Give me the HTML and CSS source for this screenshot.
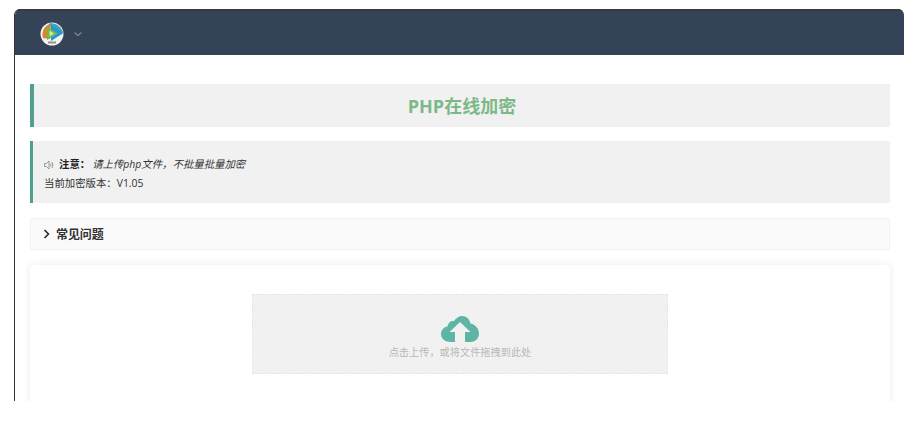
FILE: index.html
```html
<!DOCTYPE html>
<html lang="zh-CN">

<head>
    <meta charset="UTF-8">
    <meta name="viewport" content="width=device-width, initial-scale=1.0">
    <title>PHP在线加密</title>
    <link rel="stylesheet" href="styles.css">
</head>

<body>
    <div class="window">
        <div class="header">
            <svg class="logo" width="24" height="24" viewBox="0 0 24 24">
                <circle cx="12" cy="12" r="11.500" fill="#f2f2f0" />
                <path d="M3 16C1 9 5 3 11 1.500L10 17Z" fill="#d9852f" />
                <path d="M9 1.500C15 0 21 4 23.500 11L12 7Z" fill="#3aa7b9" />
                <path d="M11 3 23.500 11 11 19Z" fill="#2b93d6" />
                <path d="M7 5 18 11.500 7 18Z" fill="#6fbb4a" />
                <path d="M9.500 8.500 14 11.500 9.500 14.500Z" fill="#cfe6b0" />
                <path d="M8 20.500H16" stroke="#8e9490" stroke-width="1.800" />
            </svg>
            <svg class="caret" width="10" height="10" viewBox="0 0 10 10">
                <path d="M1.500 3.500 5 6.500 8.500 3.500" fill="none" stroke="#7f8997" stroke-width="1.300" />
            </svg>
        </div>

        <div class="content">
            <h1 class="title">PHP在线加密</h1>

            <div class="notice">
                <p class="notice-line">
                    <svg class="sound" width="10" height="10" viewBox="0 0 10 10">
                        <path d="M.5 3.500H2.500L5 1V9L2.500 6.500H.5ZM6.500 3.500Q7.500 5 6.500 6.500M8 2Q9.800 5 8 8" fill="none" stroke="#777" stroke-width=".7" />
                    </svg>
                    <strong>注意：</strong>
                    <em>请上传php文件，不批量批量加密</em>
                </p>
                <p class="notice-line">当前加密版本：V1.05</p>
            </div>

            <div class="faq">
                <svg width="8" height="10" viewBox="0 0 8 10">
                    <path d="M1.500 1 5.500 5 1.500 9" fill="none" stroke="#222" stroke-width="1.500" />
                </svg>
                <span>常见问题</span>
            </div>

            <div class="card">
                <div class="upload">
                    <svg class="cloud" width="38" height="26" viewBox="0 0 38 26">
                        <path d="M10 26C4 26 0 22.500 0 18 0 14 3 11 6.500 10.500 7 6.500 10 4.500 13 5 15 2 18 0 21 0 25.500 0 28.500 3 29.500 7.500 34.500 8.500 38 13 38 17.500 38 22.500 34 26 29 26H24V16H29.500L19 6 8.500 16H14V26Z" fill="#5fb5a5" />
                    </svg>
                    <p class="upload-text">点击上传，或将文件拖拽到此处</p>
                </div>
            </div>
        </div>
    </div>
</body>

</html>
```

FILE: styles.css
```css
* {
    margin: 0;
    padding: 0;
    box-sizing: border-box;
}

body {
    background-color: #fff;
    font-family: "Open Sans", "Noto Sans CJK SC", sans-serif;
    color: #333;
}

.window {
    width: 890px;
    height: 392px;
    margin: 9px 0 0 14px;
    overflow: hidden;
    border-left: 1px solid #333;
    border-top-left-radius: 6px;
    border-top-right-radius: 6px;
}

.header {
    height: 46px;
    padding: 2px 0 0 25px;
    display: flex;
    align-items: center;
    gap: 9px;
    background-color: #354358;
    border-top: 2px solid #3a3a3c;
}

.logo {
    display: block;
}

.content {
    padding: 29px 14px 0 15px;
}

.title {
    height: 43px;
    line-height: 45px;
    text-align: center;
    font-size: 18px;
    font-weight: 700;
    color: #7cb987;
    background-color: #f1f1f1;
    border-left: 4px solid #4fa090;
}

.notice {
    height: 62px;
    margin-top: 14px;
    padding: 14px 0 0 11px;
    background-color: #f1f1f1;
    border-left: 3px solid #4fa090;
    font-size: 10.400px;
}

.notice-line {
    height: 19px;
    line-height: 19px;
    display: flex;
    align-items: center;
}

.sound {
    margin-right: 5px;
}

.notice-line strong {
    margin-right: 2px;
    color: #222;
}

.notice-line em {
    color: #333;
}

.faq {
    height: 32px;
    margin-top: 15px;
    padding-left: 12px;
    display: flex;
    align-items: center;
    gap: 5px;
    font-size: 12px;
    letter-spacing: -.1px;
    font-weight: 700;
    color: #333;
    background-color: #fafafa;
    border: 1px solid #f1f1f1;
    border-radius: 2px;
}

.card {
    height: 160px;
    margin-top: 15px;
    padding-top: 29px;
    background-color: #fff;
    border-radius: 4px;
    box-shadow: 0 0 8px rgba(0, 0, 0, .08);
}

.upload {
    width: 416px;
    height: 80px;
    margin: 0 auto;
    padding-top: 21px;
    display: flex;
    flex-direction: column;
    align-items: center;
    background-color: #f1f1f1;
    border: 1px dashed #e6e6e6;
}

.cloud {
    display: block;
}

.upload-text {
    margin-top: 3px;
    font-size: 10.200px;
    line-height: 14px;
    color: #b8b8b8;
}
```
